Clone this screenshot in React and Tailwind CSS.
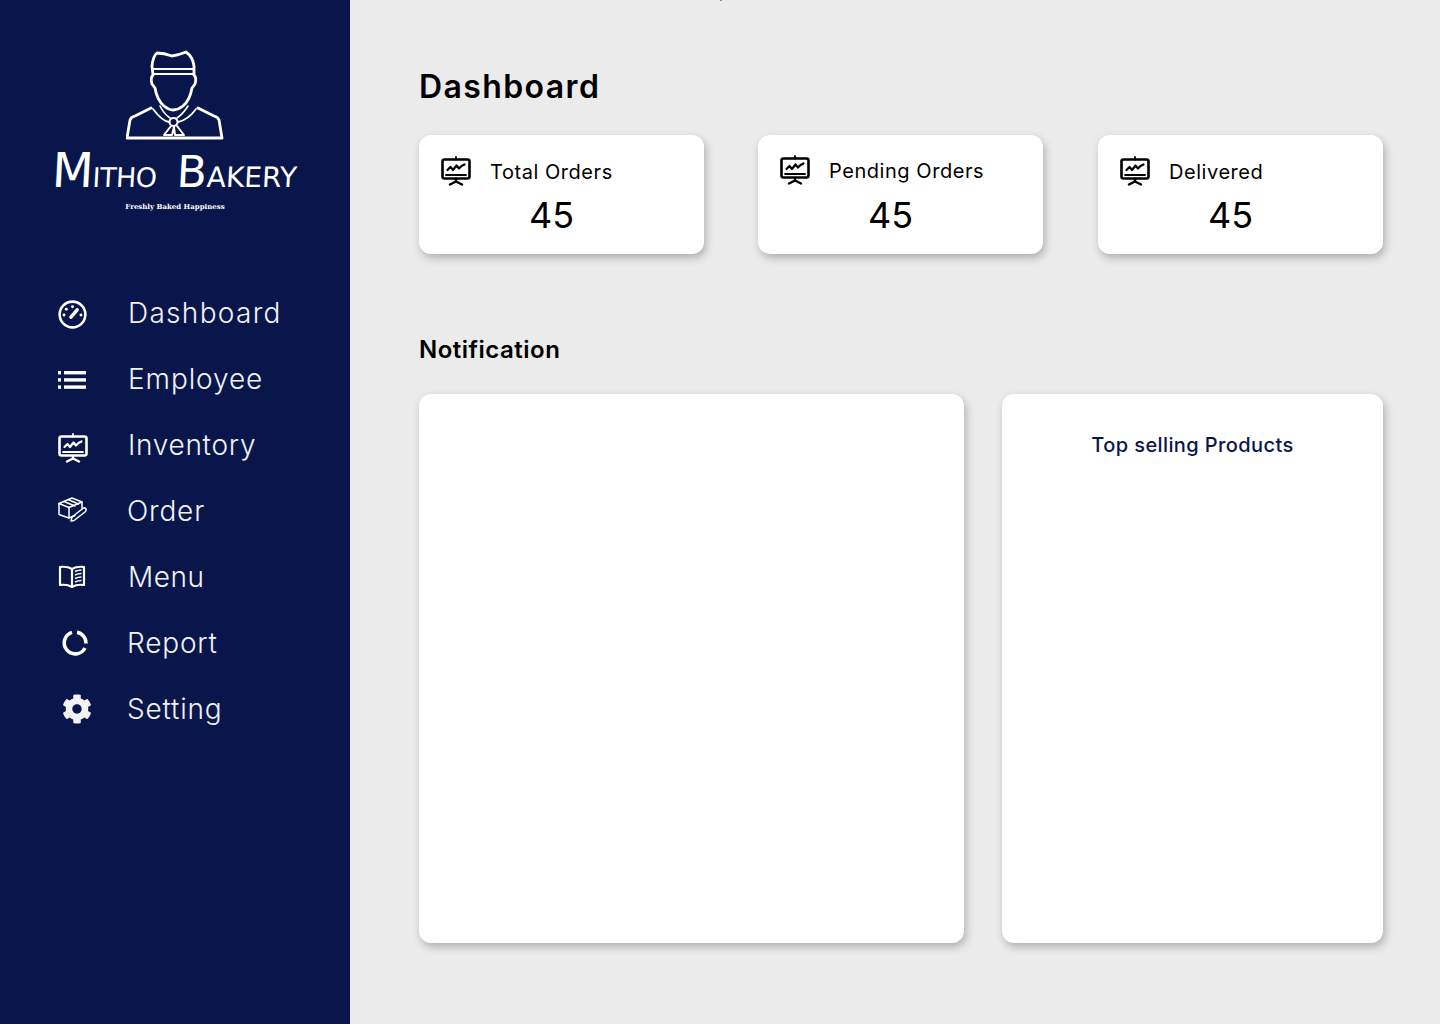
import { FaCog } from 'react-icons/fa'

const FONT = "font-['Inter','Liberation_Sans',sans-serif]"

const ChefLogo = () => (
  <svg width="98" height="90" viewBox="0 0 98 90" fill="none" stroke="white" strokeWidth="2.8" strokeLinejoin="round" strokeLinecap="round">
    <path d="M27 25 L26 16 Q27 6 31 3 Q38 3 46 6 Q53 5 60 2 Q67 7 68 16 L68 25" />
    <path d="M27 19 H68 M27 24 H68" strokeWidth="2" />
    <path d="M27 25 Q24 28 26 34 L29 38 Q31 50 38 56 Q43 60 47 60 Q52 60 57 56 Q64 50 66 38 L69 34 Q71 28 68 25" />
    <path d="M1 88 L4 70 Q5 67 9 66 L25 58 M96 88 L93 70 Q92 67 88 66 L72 58 M1 88 H96" />
    <path d="M27 59 Q36 71 43 72 M70 59 Q62 70 52 72" strokeWidth="1.8" />
    <path d="M34 56 Q38 64 44 68 M62 56 Q57 64 51 68" strokeWidth="1.6" />
    <circle cx="47.5" cy="72" r="4" strokeWidth="2" />
    <path d="M45 76 L38 85 L46 85 L48 77 L49 85 L58 85 L51 76" strokeWidth="2" />
  </svg>
)

const GaugeIcon = () => (
  <svg width="29" height="29" viewBox="0 0 28 28" fill="none" stroke="white">
    <circle cx="14" cy="14" r="12.4" strokeWidth="2.5" />
    <path d="M12.5 16.5 L18.5 9.5" strokeWidth="3.4" strokeLinecap="round" />
    <circle cx="14" cy="6.5" r="1.4" fill="white" stroke="none" />
    <circle cx="8" cy="9" r="1.4" fill="white" stroke="none" />
    <circle cx="5.8" cy="14.5" r="1.4" fill="white" stroke="none" />
    <circle cx="22.2" cy="14.5" r="1.4" fill="white" stroke="none" />
  </svg>
)

const ListIcon = () => (
  <svg width="28" height="20" viewBox="0 0 28 20" fill="white">
    <rect x="0" y="1" width="3" height="3.4" />
    <rect x="0" y="8.2" width="3" height="3.4" />
    <rect x="0" y="15.4" width="3" height="3.4" />
    <rect x="6" y="1" width="22" height="3.4" />
    <rect x="6" y="8.2" width="22" height="3.4" />
    <rect x="6" y="15.4" width="22" height="3.4" />
  </svg>
)

const ChartBoardIcon = ({ color = 'white' }) => (
  <svg width="30" height="30" viewBox="0 0 30 30" fill="none" stroke={color} strokeLinecap="round" strokeLinejoin="round">
    <path d="M15 1 V3.5" strokeWidth="1.8" />
    <rect x="1.5" y="3.5" width="27" height="19" rx="2" strokeWidth="2.6" />
    <path d="M6.5 14 L9.5 11 L12 14 L15.5 9.5 L18 12.5 L20.5 10 L23.5 8.5" strokeWidth="2.2" />
    <path d="M5 19 H25" strokeWidth="1.8" />
    <path d="M15 23 V25.5 M15 25.5 L9 28.5 M15 25.5 L21 28.5" strokeWidth="2.4" />
  </svg>
)

const BoxPenIcon = () => (
  <svg width="30" height="26" viewBox="0 0 30 26" fill="none" stroke="white" strokeWidth="1.5" strokeLinejoin="round" strokeLinecap="round">
    <path d="M1 6.5 L14 1 L24 5 L11 10.5 Z" />
    <path d="M6 4.5 L17 9 M10 2.5 L20.5 7" />
    <path d="M1 6.5 V17.5 L11 21 V10.5" />
    <path d="M11 21 L17 18.5 M24 5 V11" />
    <path d="M13 24 L14 20 L25.5 11 Q27.5 10.5 28 12 Q28.5 13.5 27 15 L16 23.5 Z" />
  </svg>
)

const BookIcon = () => (
  <svg width="28" height="24" viewBox="0 0 28 24" fill="none" stroke="white" strokeWidth="2.2" strokeLinejoin="round">
    <path d="M14 4 Q9 1 2 2 V20 Q9 19 14 22 Q19 19 26 20 V2 Q19 1 14 4 Z" />
    <path d="M14 4 V22" />
    <path d="M17 6.5 Q20 5 23.5 5 M17 10 Q20 8.5 23.5 8.5 M17 13.5 Q20 12 23.5 12 M17 17 Q20 15.5 23.5 15.5" strokeWidth="1.6" />
  </svg>
)

const DonutIcon = () => (
  <svg width="28" height="28" viewBox="0 0 28 28" fill="none" stroke="white" strokeWidth="3.6">
    <path d="M11 3.4 A 11 11 0 1 0 24 19" />
    <path d="M16 3.2 A 11 11 0 0 1 25 14.5" />
  </svg>
)

const navItems = [
  { label: 'Dashboard', icon: <GaugeIcon />, cls: 'pl-[58px]', gap: 'w-[70px] translate-y-px', track: 'tracking-[1.3px]' },
  { label: 'Employee', icon: <ListIcon />, cls: 'pl-[58px]', gap: 'w-[70px] translate-y-px', track: 'tracking-[0.9px]' },
  { label: 'Inventory', icon: <ChartBoardIcon />, cls: 'pl-[58px]', gap: 'w-[70px] translate-y-[3px]', track: 'tracking-[0.7px]' },
  { label: 'Order', icon: <BoxPenIcon />, cls: 'pl-[58px]', gap: 'w-[69px] -translate-y-px', track: 'tracking-[0.8px]' },
  { label: 'Menu', icon: <BookIcon />, cls: 'pl-[58px]', gap: 'w-[70px]', track: 'tracking-[0.5px]' },
  { label: 'Report', icon: <DonutIcon />, cls: 'pl-[61px]', gap: 'w-[66px]', track: 'tracking-[0.8px]' },
  { label: 'Setting', icon: <FaCog size={30} color="#f2f2f2" />, cls: 'pl-[62px]', gap: 'w-[65px]', track: 'tracking-[0.8px]' },
]

const stats = [
  { label: 'Total Orders', wrap: 'pt-[21px]', num: 'mt-[7px]' },
  { label: 'Pending Orders', wrap: 'pt-[20px]', num: 'mt-[8px]' },
  { label: 'Delivered', wrap: 'pt-[21px] ml-px -mr-px', num: 'mt-[7px]' },
]

const StatCard = ({ label, wrap, num }) => (
  <div className={`h-[119px] rounded-xl bg-white pl-[22px] shadow-[2px_4px_8px_rgba(0,0,0,0.25)] ${wrap}`}>
    <div className="flex h-[30px] items-center">
      <ChartBoardIcon color="black" />
      <span className="ml-[19px] translate-y-px text-[20px] tracking-[0.55px] text-black">{label}</span>
    </div>
    <div className={`ml-[88px] text-[36px] leading-[44px] text-black ${num}`}>45</div>
  </div>
)

export default function App() {
  return (
    <div className={`relative flex min-h-[1024px] bg-[#ebebeb] ${FONT}`}>
      <span className="absolute left-[720px] top-0 h-px w-[2px] bg-[#8a8a8a]" />
      <aside className="w-[350px] shrink-0 bg-[#08164c] text-white">
        <div className="flex flex-col items-center pt-[50px]">
          <ChefLogo />
          <div className="mt-[8px] flex h-[46px] items-end gap-[20px] font-['DejaVu_Sans',sans-serif] leading-none -skew-x-3">
            <span className="text-[48px] tracking-[-0.5px]">M<span className="text-[27px]">ITHO</span></span>
            <span className="text-[44px]">B<span className="text-[28px]">AKERY</span></span>
          </div>
          <div className="mt-[9px] font-['DejaVu_Serif',serif] text-[7px] font-bold leading-[8px] text-white">Freshly Baked Happiness</div>
        </div>
        <nav className="mt-[69px] flex flex-col">
          {navItems.map((item) => (
            <div key={item.label} className={`flex h-[66px] items-center ${item.cls}`}>
              <div className={`flex items-center ${item.gap}`}>{item.icon}</div>
              <span className={`text-[28px] font-light text-[#f2f2f2] ${item.track}`}>{item.label}</span>
            </div>
          ))}
        </nav>
      </aside>
      <main className="flex-1 pl-[69px] pr-[57px] pt-[66px]">
        <h1 className="text-[32px] font-semibold leading-[42px] tracking-[1.4px] text-black">Dashboard</h1>
        <div className="mt-[27px] grid grid-cols-[285px_285px_285px] gap-x-[54px]">
          {stats.map((s) => (
            <StatCard key={s.label} {...s} />
          ))}
        </div>
        <h2 className="mt-[78px] text-[24px] font-semibold leading-[36px] tracking-[0.5px] text-black">Notification</h2>
        <div className="mt-[26px] grid grid-cols-[545px_381px] gap-x-[38px]">
          <div className="h-[549px] rounded-xl bg-white shadow-[2px_4px_8px_rgba(0,0,0,0.25)]" />
          <div className="h-[549px] rounded-xl bg-white pt-[36px] text-center shadow-[2px_4px_8px_rgba(0,0,0,0.25)]">
            <p className="text-[20px] font-medium leading-[30px] tracking-[0.4px] text-[#08164c]">Top selling Products</p>
          </div>
        </div>
      </main>
    </div>
  )
}
